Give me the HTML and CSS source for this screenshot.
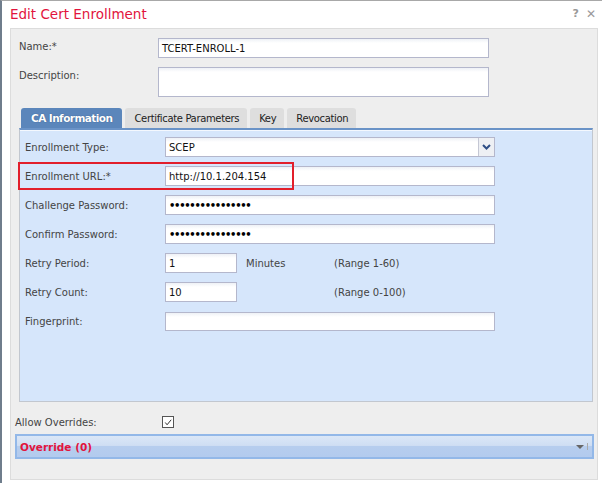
FILE: index.html
```html
<!DOCTYPE html>
<html>
<head>
<meta charset="utf-8">
<link rel="stylesheet" href="styles.css">
</head>
<body>
<div class="dialog">
  <div class="header">
    <div class="title">Edit Cert Enrollment</div>
    <div class="tools"><span class="help">?</span><span class="close">✕</span></div>
  </div>
  <div class="content">
    <div class="top-rows">
      <div class="row name-row">
        <label class="lbl">Name:*</label>
        <div class="input wide">TCERT-ENROLL-1</div>
      </div>
      <div class="row desc-row">
        <label class="lbl">Description:</label>
        <div class="input wide tall"></div>
      </div>
    </div>
    <div class="tabs">
      <div class="tab active">CA Information</div>
      <div class="tab">Certificate Parameters</div>
      <div class="tab">Key</div>
      <div class="tab">Revocation</div>
    </div>
    <div class="panel">
      <div class="frow">
        <label class="flbl">Enrollment Type:</label>
        <div class="select">
          <span class="sval">SCEP</span>
          <span class="sbtn"><svg width="9" height="6" viewBox="0 0 9 6"><path d="M1 1 L4.5 4.5 L8 1" fill="none" stroke="#2f4f86" stroke-width="2"/></svg></span>
        </div>
      </div>
      <div class="frow url-row">
        <label class="flbl">Enrollment URL:*</label>
        <div class="input finput">http://10.1.204.154</div>
        <div class="highlight"></div>
      </div>
      <div class="frow">
        <label class="flbl">Challenge Password:</label>
        <div class="input finput pw">••••••••••••••••</div>
      </div>
      <div class="frow">
        <label class="flbl">Confirm Password:</label>
        <div class="input finput pw">••••••••••••••••</div>
      </div>
      <div class="frow">
        <label class="flbl">Retry Period:</label>
        <div class="input small">1</div>
        <span class="unit">Minutes</span>
        <span class="range">(Range 1-60)</span>
      </div>
      <div class="frow">
        <label class="flbl">Retry Count:</label>
        <div class="input small">10</div>
        <span class="unit"></span>
        <span class="range">(Range 0-100)</span>
      </div>
      <div class="frow">
        <label class="flbl">Fingerprint:</label>
        <div class="input finput fp"></div>
      </div>
    </div>
    <div class="overrides">
      <label class="olbl">Allow Overrides:</label>
      <span class="checkbox"><svg width="11" height="11" viewBox="0 0 11 11"><path d="M2.5 5.5 L4.5 8 L9 2.5" fill="none" stroke="#333" stroke-width="1.1"/></svg></span>
    </div>
    <div class="override-bar">
      <span class="otext">Override (0)</span>
      <span class="oarrow"><span class="tri"></span><span class="bar"></span></span>
    </div>
  </div>
</div>
</body>
</html>
```

FILE: styles.css
```css
* { box-sizing: border-box; }
html, body { margin: 0; padding: 0; background: #fff; }
body {
  font-family: "DejaVu Sans", Verdana, sans-serif;
  font-size: 10px;
  color: #333;
  width: 602px;
  height: 483px;
  overflow: hidden;
}
.dialog {
  width: 602px;
  height: 483px;
  border-left: 2px solid #6f7d8c;
  border-top: 1px solid #a8a8a8;
  background: #fff;
  padding-left: 8px;
  padding-right: 4px;
}
.header {
  height: 27px;
  display: flex;
  align-items: center;
  justify-content: space-between;
}
.title {
  color: #e2143d;
  font-size: 13.5px;
  padding-bottom: 2px;
}
.tools {
  display: flex;
  gap: 7px;
  color: #999;
  font-size: 11px;
  font-weight: bold;
  padding-bottom: 2px;
  padding-right: 2px;
}
.close { font-weight: normal; font-size: 12px; }
.content {
  width: 588px;
  height: 452px;
  border: 1px solid #dcdcdc;
  background: #eeeeee;
  padding: 9px 4px 0 4px;
}
.top-rows { display: flex; flex-direction: column; gap: 9px; padding-left: 4px; }
.row { display: flex; align-items: flex-start; }
.lbl { width: 139px; color: #444; padding-top: 3px; }
.input {
  height: 20px;
  border: 1px solid #b4b7cc;
  background: linear-gradient(#eef1f6 0, #fff 4px);
  padding: 0 3px;
  display: flex;
  align-items: center;
  color: #111;
  font-size: 10px;
}
.wide { width: 331px; }
.tall { height: 30px; }
.tabs {
  display: flex;
  gap: 3px;
  margin-top: 11px;
  height: 20px;
  margin-left: 6px;
}
.tab {
  background: #dedede;
  border-radius: 3px 3px 0 0;
  padding: 0 8px 0 9px;
  display: flex;
  align-items: center;
  color: #222;
  font-size: 10px;
  letter-spacing: -0.35px;
}
.tab.active {
  background: #5b86bb;
  color: #fff;
  font-weight: bold;
  text-shadow: 0 0 1px #2b4a78;
  padding: 0 10px;
  font-size: 10.5px;
  letter-spacing: -0.55px;
}
.panel {
  width: 574px;
  height: 274px;
  margin-left: 4px;
  border-top: 2px solid #6a93c7;
  border-left: 1px solid #c2c7cf;
  border-right: 1px solid #c2c7cf;
  border-bottom: 1px solid #c2c7cf;
  background: #d6e6fb;
  padding: 7px 0 0 5px;
  box-shadow: inset 0 1px 0 #f4f8fe;
}
.frow {
  display: flex;
  align-items: center;
  height: 20px;
  margin-bottom: 9px;
  position: relative;
}
.flbl { width: 140px; color: #444; }
.finput { width: 330px; }
.pw { font-size: 10px; letter-spacing: -1.3px; color: #000; font-weight: bold; }
.fp { height: 19px; }
.select {
  width: 330px;
  height: 20px;
  border: 1px solid #b4b7cc;
  background: linear-gradient(#eef1f6 0, #fff 4px);
  display: flex;
  align-items: center;
  justify-content: space-between;
  color: #111;
}
.sval { padding-left: 3px; }
.sbtn {
  width: 16px;
  height: 18px;
  border-left: 1px solid #c4c7d4;
  background: #eef0f4;
  display: flex;
  align-items: center;
  justify-content: center;
}
.small { width: 72px; }
.unit { width: 97px; padding-left: 9px; color: #444; }
.range { color: #444; }
.highlight {
  position: absolute;
  left: -7px;
  top: -4px;
  width: 276px;
  height: 28px;
  border: 2px solid #e21f2b;
}
.overrides {
  display: flex;
  align-items: center;
  height: 20px;
  margin-top: 10px;
}
.olbl { width: 147px; color: #444; }
.checkbox {
  width: 12px;
  height: 12px;
  border: 1px solid #555;
  background: #fff;
  display: flex;
  align-items: center;
  justify-content: center;
}
.override-bar {
  margin-top: 2px;
  width: 579px;
  height: 25px;
  border: 2px solid #93b8e8;
  background: linear-gradient(#dbe7f7 0%, #cfdef3 45%, #b6cdee 50%, #b3cbee 100%);
  display: flex;
  align-items: center;
  justify-content: space-between;
  padding: 0 4px 0 3px;
}
.otext { color: #e2143d; font-weight: bold; font-size: 10.5px; }
.oarrow { display: flex; align-items: center; gap: 3px; }
.tri {
  width: 0; height: 0;
  border-left: 4px solid transparent;
  border-right: 4px solid transparent;
  border-top: 4px solid #666;
}
.bar { width: 1px; height: 7px; background: #aaa; }
```
